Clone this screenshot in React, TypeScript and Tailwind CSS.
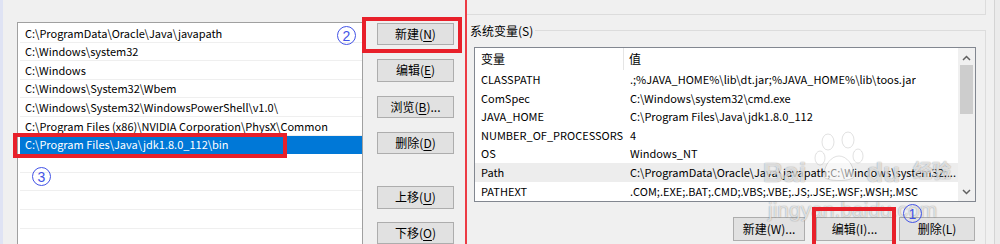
import React from 'react'

const font = "font-['Noto_Sans_CJK_SC','Noto_Sans',sans-serif]"

const pathItems = [
  'C:\\ProgramData\\Oracle\\Java\\javapath',
  'C:\\Windows\\system32',
  'C:\\Windows',
  'C:\\Windows\\System32\\Wbem',
  'C:\\Windows\\System32\\WindowsPowerShell\\v1.0\\',
  'C:\\Program Files (x86)\\NVIDIA Corporation\\PhysX\\Common',
  'C:\\Program Files\\Java\\jdk1.8.0_112\\bin',
  '', '', '', '', '',
]

const sysVars = [
  ['CLASSPATH', '.;%JAVA_HOME%\\lib\\dt.jar;%JAVA_HOME%\\lib\\toos.jar'],
  ['ComSpec', 'C:\\Windows\\system32\\cmd.exe'],
  ['JAVA_HOME', 'C:\\Program Files\\Java\\jdk1.8.0_112'],
  ['NUMBER_OF_PROCESSORS', '4'],
  ['OS', 'Windows_NT'],
  ['Path', 'C:\\ProgramData\\Oracle\\Java\\javapath;C:\\Windows\\system32;...'],
  ['PATHEXT', '.COM;.EXE;.BAT;.CMD;.VBS;.VBE;.JS;.JSE;.WSF;.WSH;.MSC'],
]

// access key label, e.g. 新建(N) with the N underlined
function KeyLabel({ text, k, tail = '' }: { text: string; k: string; tail?: string }) {
  return (
    <span>
      {text}(<span className="underline underline-offset-2">{k}</span>){tail}
    </span>
  )
}

function WinButton({ children, className = '' }: { children: React.ReactNode; className?: string }) {
  return (
    <div className={`flex items-center justify-center h-[24px] bg-[#e1e1e1] border border-[#adadad] text-[12px] text-black ${className}`}>
      {children}
    </div>
  )
}

function Circled({ n, className = '' }: { n: string; className?: string }) {
  return (
    <div className={`absolute flex items-center justify-center w-[19px] h-[19px] rounded-full border-[1.5px] border-[#4353e6] text-[#4353e6] text-[14px] leading-none font-['Liberation_Sans',sans-serif] ${className}`}>
      {n}
    </div>
  )
}

const wm = "text-white/70 [text-shadow:0_0_1px_rgba(0,0,0,0.35),0_0_2px_rgba(0,0,0,0.12)] whitespace-nowrap font-['Liberation_Sans','Noto_Sans_CJK_SC',sans-serif]"

export default function App() {
  return (
    <div className={`relative flex w-[1000px] h-[244px] overflow-hidden bg-[#f0f0f0] ${font}`}>
      {/* window edge on the far left */}
      <div className="w-[3px] shrink-0 bg-[#dfe3f4]" />

      {/* edit environment variable dialog */}
      <div className="flex w-[462px] shrink-0 pl-[14px] pt-[22px] border-t-[3px] border-[#f7f7f7] -mt-[3px]">
        <div className="w-[346px] h-[240px] shrink-0 bg-white border border-b-0 border-[#a0a0a0] pt-[1px]">
          {pathItems.map((p, i) => (
            <div
              key={i}
              className={`h-[18.6px] flex items-center pl-[5px] ml-[2px] text-[11px] whitespace-nowrap border-b ${
                i === 6 ? 'bg-[#0078d7] text-white border-[#0078d7]' : 'text-black border-[#efefef]'
              }`}
            >
              {p}
            </div>
          ))}
        </div>
        <div className="flex flex-col w-[77px] ml-[14px] pt-[1px]">
          <WinButton><KeyLabel text="新建" k="N" /></WinButton>
          <WinButton className="mt-[14px]"><KeyLabel text="编辑" k="E" /></WinButton>
          <WinButton className="mt-[14px]"><KeyLabel text="浏览" k="B" tail="..." /></WinButton>
          <WinButton className="mt-[14px]"><KeyLabel text="删除" k="D" /></WinButton>
          <WinButton className="mt-[32px]"><KeyLabel text="上移" k="U" /></WinButton>
          <WinButton className="mt-[13px]"><KeyLabel text="下移" k="O" /></WinButton>
        </div>
      </div>

      {/* red divider drawn on the screenshot */}
      <div className="w-[2px] shrink-0 bg-[#ec3b45]" />

      {/* environment variables dialog */}
      <div className="flex flex-1">
        <div className="flex flex-col w-[519px] shrink-0">
          <div className="h-[15px] border-b border-r border-[#dcdcdc]" />
          <div className="flex h-[16px] mt-[8px] pl-[3px]">
            <span className="text-[12px] leading-[16px] text-black pr-[2px]">系统变量(S)</span>
            <div className="flex-1 mt-[7px] border-t border-r border-[#dcdcdc]" />
          </div>
          <div className="flex-1 flex flex-col border-r border-[#dcdcdc] pl-[7px] pr-[9px] pt-[8px]">
            <div className="flex h-[155px] bg-white border border-[#828790]">
              <div className="flex-1 flex flex-col">
                <div className="flex h-[22px] text-[12px] text-black">
                  <div className="w-[149px] pl-[6px] flex items-center border-r border-[#e5e5e5]">变量</div>
                  <div className="pl-[5px] flex items-center">值</div>
                </div>
                {sysVars.map(([k, v]) => (
                  <div
                    key={k}
                    className={`flex h-[18.6px] items-center text-[11px] text-black whitespace-nowrap ${k === 'Path' ? 'bg-[#ededed]' : ''}`}
                  >
                    <div className="w-[150px] shrink-0 pl-[6px]">{k}</div>
                    <div className="pl-[5px] overflow-hidden">{v}</div>
                  </div>
                ))}
              </div>
              {/* scrollbar */}
              <div className="w-[17px] shrink-0 flex flex-col items-center bg-[#f0f0f0]">
                <svg width="9" height="6" viewBox="0 0 9 6" className="mt-[7px]">
                  <path d="M1 5 L4.5 1.5 L8 5" fill="none" stroke="#606060" strokeWidth="1.5" />
                </svg>
                <div className="w-[13px] h-[49px] mt-[4px] bg-[#cdcdcd]" />
                <div className="flex-1" />
                <svg width="9" height="6" viewBox="0 0 9 6" className="mb-[6px]">
                  <path d="M1 1 L4.5 4.5 L8 1" fill="none" stroke="#606060" strokeWidth="1.5" />
                </svg>
              </div>
            </div>
            <div className="flex mt-[15px] pl-[259px]">
              <WinButton className="w-[72px]">新建(W)...</WinButton>
              <WinButton className="w-[77px] ml-[11px]">编辑(I)...</WinButton>
              <WinButton className="w-[76px] ml-[6px]">删除(L)</WinButton>
            </div>
          </div>
        </div>
        <div className="flex-1 flex">
          <div className="w-[8px]" />
          <div className="flex-1 border-l border-[#d4d4d4] bg-[#ebebeb]" />
        </div>
      </div>

      {/* baidu watermark */}
      <div className={`absolute left-[763px] top-[152px] text-[28px] font-bold ${wm}`}>Bai</div>
      <svg className="absolute left-[812px] top-[128px]" width="56" height="56" viewBox="0 0 56 56" fill="rgba(255,255,255,0.55)" stroke="rgba(0,0,0,0.12)">
        <ellipse cx="16" cy="14" rx="6" ry="8" />
        <ellipse cx="36" cy="12" rx="6" ry="8" />
        <ellipse cx="8" cy="30" rx="5" ry="7" />
        <ellipse cx="46" cy="28" rx="5" ry="7" />
        <path d="M12 48 C12 36 20 28 27 28 C34 28 42 36 42 48 C42 54 12 54 12 48 Z" />
      </svg>
      <div className={`absolute left-[866px] top-[152px] text-[28px] font-bold ${wm}`}>du</div>
      <div className={`absolute left-[913px] top-[158px] text-[19px] font-bold ${wm}`}>经验</div>
      <div className={`absolute left-[768px] top-[194px] text-[21px] ${wm}`}>jingyan.baidu.com</div>

      {/* annotations drawn on top of the screenshot */}
      <div className="absolute left-[13px] top-[133px] w-[274px] h-[25px] border-[4px] border-[#e8202a]" />
      <div className="absolute left-[362px] top-[17px] w-[100px] h-[36px] border-[4px] border-[#e8202a]" />
      <div className="absolute left-[812px] top-[207px] w-[84px] h-[42px] border-[4px] border-[#e8202a]" />
      <Circled n="2" className="left-[337px] top-[26px]" />
      <Circled n="3" className="left-[32px] top-[167px]" />
      <Circled n="1" className="left-[903px] top-[204px]" />
    </div>
  )
}
